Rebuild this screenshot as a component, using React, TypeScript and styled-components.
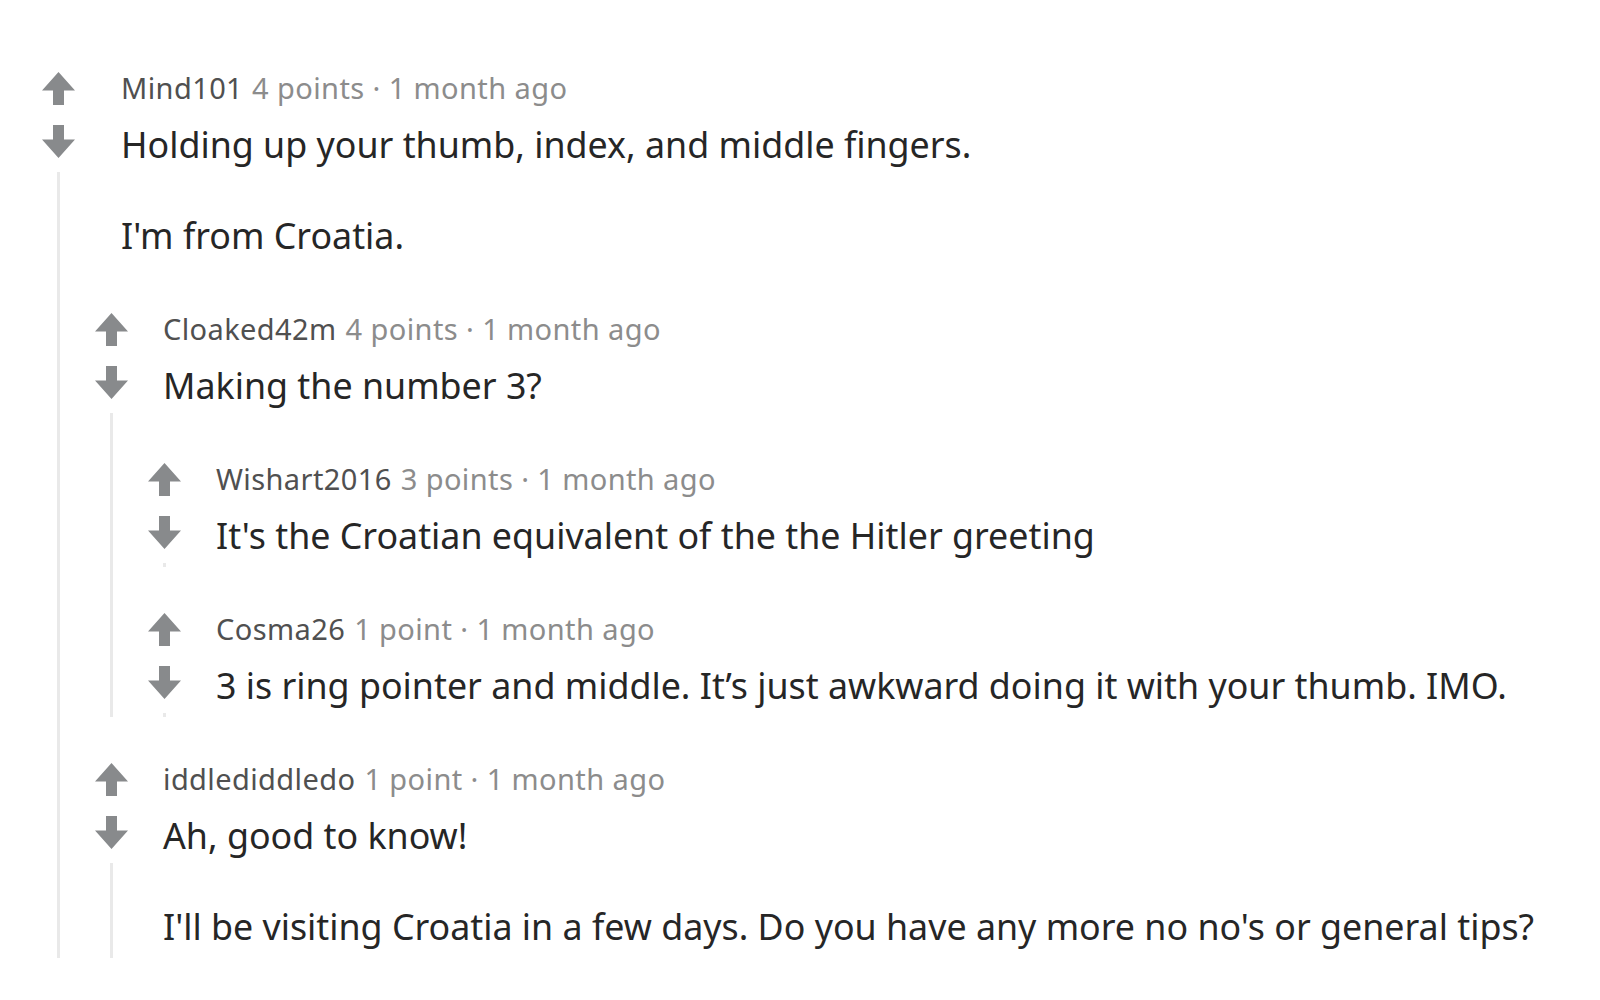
import styled, { createGlobalStyle } from 'styled-components';

const GlobalStyle = createGlobalStyle`
  html, body {
    margin: 0;
    padding: 0;
    background: #ffffff;
  }
  body {
    font-family: 'Noto Sans', 'Open Sans', sans-serif;
  }
`;

type CommentData = {
  author: string;
  points: string;
  time: string;
  body: string[];
  replies?: CommentData[];
};

const thread: CommentData = {
  author: 'Mind101',
  points: '4 points',
  time: '1 month ago',
  body: ['Holding up your thumb, index, and middle fingers.', "I'm from Croatia."],
  replies: [
    {
      author: 'Cloaked42m',
      points: '4 points',
      time: '1 month ago',
      body: ['Making the number 3?'],
      replies: [
        {
          author: 'Wishart2016',
          points: '3 points',
          time: '1 month ago',
          body: ["It's the Croatian equivalent of the the Hitler greeting"],
        },
        {
          author: 'Cosma26',
          points: '1 point',
          time: '1 month ago',
          body: ['3 is ring pointer and middle. It\u2019s just awkward doing it with your thumb. IMO.'],
        },
      ],
    },
    {
      author: 'iddlediddledo',
      points: '1 point',
      time: '1 month ago',
      body: [
        'Ah, good to know!',
        "I'll be visiting Croatia in a few days. Do you have any more no no's or general tips?",
      ],
    },
  ],
};

const Page = styled.div`
  padding: 68px 0 40px 42px;
`;

const CommentWrap = styled.div<{ $nested: boolean }>`
  display: flex;
  padding-top: ${(p) => (p.$nested ? '42px' : '0')};
`;

const Rail = styled.div`
  width: 53px;
  flex-shrink: 0;
  display: flex;
  flex-direction: column;
  align-items: flex-start;
`;

const VoteButton = styled.button<{ $down?: boolean }>`
  width: 33px;
  height: 33px;
  padding: 0;
  border: 0;
  background: transparent;
  color: #888a8c;
  margin-top: ${(p) => (p.$down ? '20px' : '4px')};
  cursor: pointer;
  svg {
    display: block;
  }
`;

const ThreadLine = styled.div`
  flex: 1;
  width: 3px;
  margin: 14px 0 0 15px;
  background: #e9e9e9;
`;

const Main = styled.div`
  flex: 1;
  min-width: 0;
`;

const Meta = styled.div<{ $top: boolean }>`
  padding-left: ${(p) => (p.$top ? '26px' : '15px')};
  height: 40px;
  line-height: 40px;
  font-size: 29px;
  letter-spacing: 0.4px;
  color: #8c8c8c;
  white-space: nowrap;
`;

const Author = styled.span`
  color: #505050;
  margin-right: 9px;
`;

const Body = styled.div<{ $top: boolean }>`
  padding: 12px 0 8px ${(p) => (p.$top ? '26px' : '15px')};
  font-size: 35.8px;
  line-height: 48px;
  color: #262626;
  white-space: nowrap;

  p {
    margin: 0;
  }
  p + p {
    margin-top: 43px;
  }
`;

const Arrow = ({ down }: { down?: boolean }) => (
  <svg width="33" height="33" viewBox="0 0 33 33" fill="currentColor">
    {down ? (
      <path d="M11 0 H22 V14.5 H33 L16.5 33 L0 14.5 H11 Z" />
    ) : (
      <path d="M16.5 0 L33 18.5 H22 V33 H11 V18.5 H0 Z" />
    )}
  </svg>
);

const Comment = ({ data, depth }: { data: CommentData; depth: number }) => (
  <CommentWrap $nested={depth > 0}>
    <Rail>
      <VoteButton aria-label="upvote">
        <Arrow />
      </VoteButton>
      <VoteButton $down aria-label="downvote">
        <Arrow down />
      </VoteButton>
      <ThreadLine />
    </Rail>
    <Main>
      <Meta $top={depth === 0}>
        <Author>{data.author}</Author>
        {data.points} · {data.time}
      </Meta>
      <Body $top={depth === 0}>
        {data.body.map((t, i) => (
          <p key={i}>{t}</p>
        ))}
      </Body>
      {data.replies?.map((r, i) => (
        <Comment key={i} data={r} depth={depth + 1} />
      ))}
    </Main>
  </CommentWrap>
);

export default function App() {
  return (
    <>
      <GlobalStyle />
      <Page>
        <Comment data={thread} depth={0} />
      </Page>
    </>
  );
}
